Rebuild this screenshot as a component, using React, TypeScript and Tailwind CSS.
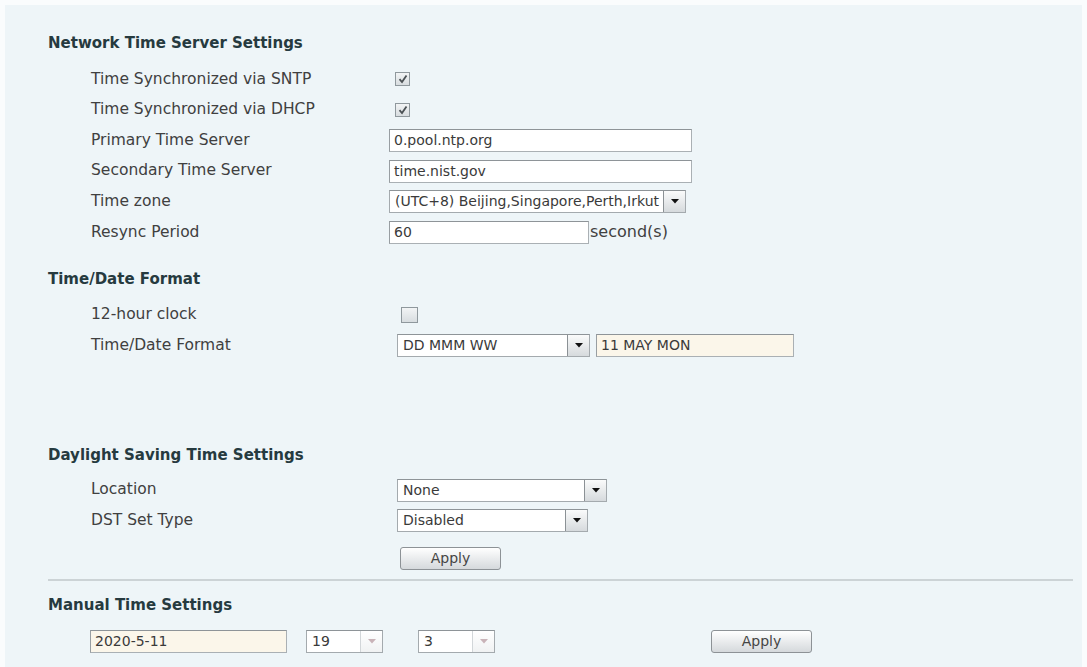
import React from "react";

const Check = ({ checked, big }: { checked?: boolean; big?: boolean }) => (
  <div
    className={`flex items-center justify-center border border-[#8f989d] bg-linear-to-b from-[#f2f4f5] to-[#d8dde0] ${
      big ? "h-[16px] w-[17px]" : "h-[14px] w-[15px]"
    }`}
  >
    {checked && (
      <svg width="10" height="10" viewBox="0 0 10 10">
        <path d="M1.5 5.2 L4 8 L8.5 1.5" fill="none" stroke="#4b5155" strokeWidth="1.8" />
      </svg>
    )}
  </div>
);

const Input = ({ value, w, cream }: { value: string; w: string; cream?: boolean }) => (
  <div
    className={`flex h-[23px] items-center border border-[#aab0b4] border-t-[#8e9498] border-l-[#989ea2] px-[4px] text-[14px] text-[#3a3a3a] ${w} ${
      cream ? "bg-[#fbf6ea]" : "bg-white"
    }`}
  >
    {value}
  </div>
);

const Arrow = ({ faded }: { faded?: boolean }) => (
  <svg width="8" height="5" viewBox="0 0 8 5">
    <path d="M0 0 H8 L4 4.5 Z" fill={faded ? "#c9b3b8" : "#111"} />
  </svg>
);

const Select = ({ value, w, faded }: { value: string; w: string; faded?: boolean }) => (
  <div
    className={`flex h-[23px] items-center overflow-hidden border border-[#a4aaae] border-t-[#8e9498] bg-white text-[14px] text-[#3a3a3a] ${w}`}
  >
    <span className="min-w-0 flex-1 whitespace-nowrap pl-[5px]">{value}</span>
    <div
      className={`flex h-full w-[22px] flex-none items-center justify-center border-l bg-linear-to-b ${
        faded
          ? "border-[#d2d6d9] from-white to-[#f0f2f3]"
          : "border-[#8b9195] from-[#fafbfb] to-[#d6dadd]"
      }`}
    >
      <Arrow faded={faded} />
    </div>
  </div>
);

const ApplyBtn = () => (
  <button className="h-[23px] w-[101px] rounded-[3px] border border-[#8d9296] bg-linear-to-b from-white to-[#d5d9dc] text-[14px] text-[#454545]">
    Apply
  </button>
);

const Heading = ({ children, mt }: { children: React.ReactNode; mt: string }) => (
  <div className={`flex h-5 items-center text-[15px] font-bold text-[#263a3f] ${mt}`}>{children}</div>
);

const Row = ({ label, lw, children }: { label: string; lw: string; children: React.ReactNode }) => (
  <div className="flex h-[30.6px] items-center pl-[43px]">
    <span className={`flex-none ${lw}`}>{label}</span>
    {children}
  </div>
);

export default function App() {
  return (
    <div className="h-[667px] w-[1087px] overflow-hidden bg-[#fafcfd] pl-[5px] pt-[5px] font-['DejaVu_Sans',sans-serif]">
      <div className="h-full w-[1077px] bg-[#eef5f8] pl-[43px] pr-[9px] pt-[28px] text-[15.5px] text-[#404040]">
        <Heading mt="mt-0">Network Time Server Settings</Heading>
        <div className="mt-[11px]">
          <Row label="Time Synchronized via SNTP" lw="w-[298px]">
            <div className="pl-[6px]">
              <Check checked />
            </div>
          </Row>
          <Row label="Time Synchronized via DHCP" lw="w-[298px]">
            <div className="pl-[6px]">
              <Check checked />
            </div>
          </Row>
          <Row label="Primary Time Server" lw="w-[298px]">
            <Input value="0.pool.ntp.org" w="w-[303px]" />
          </Row>
          <Row label="Secondary Time Server" lw="w-[298px]">
            <Input value="time.nist.gov" w="w-[303px]" />
          </Row>
          <Row label="Time zone" lw="w-[298px]">
            <Select value="(UTC+8) Beijing,Singapore,Perth,Irkut" w="w-[297px]" />
          </Row>
          <Row label="Resync Period" lw="w-[298px]">
            <Input value="60" w="w-[200px]" />
            <span className="pl-[1px] text-[16px]">second(s)</span>
          </Row>
        </div>

        <Heading mt="mt-[22px]">Time/Date Format</Heading>
        <div className="mt-[10px]">
          <Row label="12-hour clock" lw="w-[310px]">
            <Check big />
          </Row>
          <Row label="Time/Date Format" lw="w-[306px]">
            <div className="flex items-center gap-[6px]">
              <Select value="DD MMM WW" w="w-[193px]" />
              <Input value="11 MAY MON" w="w-[198px]" cream />
            </div>
          </Row>
        </div>

        <Heading mt="mt-[84px]">Daylight Saving Time Settings</Heading>
        <div className="mt-[10px]">
          <Row label="Location" lw="w-[306px]">
            <Select value="None" w="w-[210px]" />
          </Row>
          <Row label="DST Set Type" lw="w-[306px]">
            <Select value="Disabled" w="w-[191px]" />
          </Row>
          <div className="mt-[11px] pl-[352px]">
            <ApplyBtn />
          </div>
        </div>

        <div className="mt-[9px] h-[2px] bg-[#ccd3d6]" />

        <Heading mt="mt-[14px]">Manual Time Settings</Heading>
        <div className="mt-[15px] flex items-center pl-[42px]">
          <Input value="2020-5-11" w="w-[197px]" cream />
          <div className="ml-[19px]">
            <Select value="19" w="w-[77px]" faded />
          </div>
          <div className="ml-[35px]">
            <Select value="3" w="w-[77px]" faded />
          </div>
          <div className="ml-[216px]">
            <ApplyBtn />
          </div>
        </div>
      </div>
    </div>
  );
}
